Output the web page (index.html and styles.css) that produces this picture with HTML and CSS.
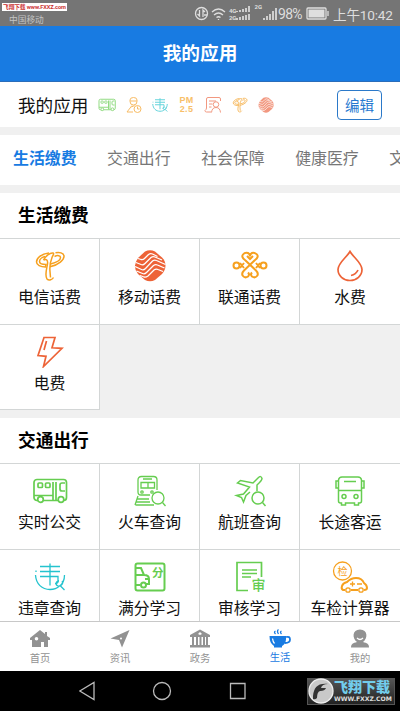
FILE: index.html
```html
<!DOCTYPE html>
<html lang="zh-CN">
<head>
<meta charset="utf-8">
<meta name="viewport" content="width=device-width">
<title>我的应用</title>
<link rel="stylesheet" href="styles.css">
</head>
<body>
<svg class="defs" aria-hidden="true">
  <symbol id="bus" viewBox="0 0 36 32"><rect x="2" y="4.5" width="32.5" height="21" rx="3"/><path d="M2 20.5h19M21 7v18M24 7v18M33 8h-3q-2 0-2 2v4q0 2 2 2h3"/><rect x="6" y="8" width="4.5" height="4.5" rx="1"/><rect x="13.500" y="8" width="4.500" height="4.500" rx="1"/><g fill="#fff"><circle cx="8.500" cy="24.500" r="2.800"/><circle cx="29" cy="24.500" r="2.800"/></g></symbol>
  <symbol id="wei" viewBox="0 0 36 32"><path d="M3.500 14C4 23 10 28.500 18 28.500c4 0 7-1 9.500-3.500M32.500 14c0 5-2 9-5 11M27 20c-3 0-4 4-1 5s6-3 4-5M28.500 25l4 4M4 9.500v1.500M8 5.500h20M8 10.500h20M8 15.500h18v5q0 2-3 2M18 2.500v22"/></symbol>
  <symbol id="telecom" viewBox="0 0 36 32"><path d="M17 3C9 4 4.500 8 4.500 12c0 3 4 5 9 5l.5-2.500c-4 0-6.500-1-6.500-3C7.500 9 10.500 7 13 6.500"/><path d="M11.500 10c2-4 6.500-7.500 9.500-7 1.500.5 0 2-1 4.500-2 5-2.500 9-2 14l.5 6M11.500 10c3-1.500 4.500 0 4 4-1 6-3 11-.5 15 2 2 5.500.5 6.500-1.500"/><path d="M23.500 2.800c4-.8 8 0 8.500 3 .5 4-5.500 9-14 11M22.500 6.500c3-1.500 6-1 6 1 0 2.500-4 5-10 6.500"/></symbol>
  <symbol id="mobile" viewBox="0 0 36 32"><path class="solid" d="M13 1.500Q18-1 23 1.500l7 6q3.500 3.500 3.500 8T30 24l-7 6q-5 2.500-10 0l-7-6Q2.500 20 3 15.500T6.500 7.500z"/><g stroke="#fff" stroke-width="1.300"><path d="M6 8.500l3 1q2 .5 3.500-1l4-4q2-1.500 4-.5l5 2.500M4 12.500l5 2q2 1 4-1l6-6q2-1.500 4-.5l7 3M3 16.500l6.500 3q2 1 4-1l7-7.500q2-1.500 4-.5l9 4M4.500 21l6 2.500q2 1 4-1l7-7q2-1.500 4-.5l7 3M8 25.500l4 1.500q2 .5 4-1l6-6q2-1.500 4-.5l5 2"/></g></symbol>
  <symbol id="magnifier" viewBox="0 0 36 32"><circle cx="26" cy="23" r="6" fill="#fff"/><path d="M30.500 27.500l3 3.500"/></symbol>
</svg>

<header class="status">
  <div class="carrier"><span class="stamp">飞翔下载 www.FXXZ.com</span><span class="operator">中国移动</span></div>
  <div class="signals">
    <svg width="15" height="15" viewBox="0 0 15 15"><circle cx="7.500" cy="7.500" r="6"/><path d="M5.500 4v6l-2-2M9 11V4l2 2M10 9h3"/></svg>
    <svg width="15" height="14" viewBox="0 0 15 14"><path d="M1 5q6.500-6 13 0M3 8q4.500-4 9 0M5.500 10.500q2-1.500 4 0M7.500 12v1"/></svg>
    <span class="gen">4G<br>2G</span>
    <svg class="bars" width="15" height="15" viewBox="0 0 15 15"><path d="M1 6V5M4 6V4M7 6V3M10 6V2M13 6V0M1 14v-2M4 14v-3M7 14v-4M10 14v-5M13 14V8"/></svg>
    <span class="gen single">2G</span>
    <svg class="bars" width="15" height="15" viewBox="0 0 15 15"><path d="M2 14v-2M5 14v-4M8 14V8M11 14V5M14 14V2"/></svg>
    <span class="percent">98%</span>
    <svg class="battery" width="23" height="13" viewBox="0 0 23 13"><rect x="1" y="1" width="19" height="11" rx="1"/><path class="solid" d="M2.500 2.500h16v8h-16z"/><path d="M22 4v5"/></svg>
    <span class="time">上午10:42</span>
  </div>
</header>
<h1 class="title">我的应用</h1>

<main class="content">
  <section class="mine">
    <span class="mine-label">我的应用</span>
    <div class="mini-icons">
      <svg class="green"><use href="#bus"/></svg>
      <svg class="amber" viewBox="0 0 36 32"><path d="M10 9V6q0-5 7-5t7 5v3q0 7-7 7t-7-7zM10 8h14M14 17L4 30h12M13 20l6-3"/><circle cx="25" cy="24" r="7"/><path d="M25 19v5h4"/></svg>
      <svg class="teal"><use href="#wei"/></svg>
      <span class="pm">PM<br>2.5</span>
      <svg class="coral" viewBox="0 0 36 32"><path d="M14 30H5q-3 0-3-3 3-2 3-5V4q0-3 3-3h22q3 0 3 3v4M10 8h14M10 14h7M10 20h5"/><circle cx="24" cy="15" r="5.500"/><path d="M15 31q1-10 9-10t9 10"/></svg>
      <svg class="amber"><use href="#telecom"/></svg>
      <svg class="coral"><use href="#mobile"/></svg>
    </div>
    <button class="edit">编辑</button>
  </section>

  <nav class="tabs"><span class="tab active">生活缴费</span><span class="tab">交通出行</span><span class="tab">社会保障</span><span class="tab">健康医疗</span><span class="tab">文</span></nav>

  <section class="group">
    <h2>生活缴费</h2>
    <div class="grid">
      <div class="cell"><svg class="icon orange strong"><use href="#telecom"/></svg><span>电信话费</span></div>
      <div class="cell"><svg class="icon red"><use href="#mobile"/></svg><span>移动话费</span></div>
      <div class="cell"><svg class="icon orange thick" viewBox="0 0 36 32"><path d="M13 10L24 20.500q3 3 1 5.500t-5 .5q-2-2 0-4M23 10L12 20.500q-3 3-1 5.500t5 .5q2-2 0-4M13 10q-4-3-2-5.500t5-1.500q2 1 2 3.500 0-2.500 2-3.500t5 1.500q2 2.500-2 5.500M15 6l3 3 3-3M8 13l4 5M12 13l-4 5M24 13l4 5M28 13l-4 5"/><circle cx="4.500" cy="15.500" r="3"/><circle cx="31.500" cy="15.500" r="3"/></svg><span>联通话费</span></div>
      <div class="cell"><svg class="icon red bold" viewBox="0 0 36 32"><path d="M18 1.500C15 7 6 13 6 19.500a12 11 0 0 0 24 0C30 13 21 7 18 1.500zM19 25.500q5-1 7-5.500"/></svg><span>水费</span></div>
      <div class="cell"><svg class="icon red bold" viewBox="0 0 36 32"><path d="M12 1.500h11l-3 10.300 10 .500L11.500 30.500 14 20.300l-8-.800zM14.500 5L12 14"/></svg><span>电费</span></div>
    </div>
  </section>

  <section class="group">
    <h2>交通出行</h2>
    <div class="grid">
      <div class="cell"><svg class="icon green bold"><use href="#bus"/></svg><span>实时公交</span></div>
      <div class="cell"><svg class="icon green" viewBox="0 0 36 32"><path d="M18 20H9q-3 0-3-3V5q0-3.500 3.500-3.500h12Q25 1.500 25 5v10M11 4h9M9 7.500h13.500V13H9zM16 7.500V13M6 21l-3 9M5.500 24H17M4.500 27H18M3.500 30H22"/><circle cx="10" cy="17" r="1.200"/><circle cx="20" cy="17" r="1.200"/><use href="#magnifier" width="36" height="32"/></svg><span>火车查询</span></div>
      <div class="cell"><svg class="icon green strong" viewBox="0 0 36 32"><path d="M18 17L14 20.500l-2.500 6.500-2-4.500-5-2 7-1.500 6-7-12-4 3-2.500 12.500 2.500 5-5q3-3 4 .5 0 2-5 6.500v6"/><use href="#magnifier" width="36" height="32"/></svg><span>航班查询</span></div>
      <div class="cell"><svg class="icon green strong" viewBox="0 0 36 32"><path d="M6.500 26V5Q7 2 10 2h16q3 0 3.500 3v21q0 2-2 2h-1v2h-4v-2h-9v2h-4v-2h-1q-2 0-2-2zM6.500 15.500h23M12 6.500h12M6.500 6H4v7h2.500M29.500 6H32v7h-2.500"/><circle cx="12" cy="21.500" r="2"/><circle cx="24" cy="21.500" r="2"/></svg><span>长途客运</span></div>
      <div class="cell"><svg class="icon teal"><use href="#wei"/></svg><span>违章查询</span></div>
      <div class="cell"><svg class="icon green thick" viewBox="0 0 36 32"><rect x="3.500" y="2.500" width="29" height="27" rx="2"/><path d="M4 7h5l3 7M4 14h8q5 0 5 4v5h-3M4 24h4M13 18h3"/><circle cx="11.500" cy="24" r="2.500"/><text class="glyph heavy" x="20" y="16" font-size="11.500">分</text></svg><span>满分学习</span></div>
      <div class="cell"><svg class="icon green bold" viewBox="0 0 36 32"><path d="M16 29.500H5V1.500h24.500V16M10 9h15M10 12.500h15M10 16h9"/><text class="glyph medium" x="19.500" y="29" font-size="14">审</text></svg><span>审核学习</span></div>
      <div class="cell"><svg class="icon orange" viewBox="0 0 36 32"><circle cx="10.500" cy="10" r="9"/><text class="glyph" x="5.500" y="14" font-size="10">检</text><path class="thick" d="M13 29h-2q-2-1-1-4 1-3 5-4 4-4 9-4 6 0 8 5 3 2 3 5 0 2-3 2M19 29h7"/><path d="M18 23h5M20.500 20.500v5M25 23h5"/><circle cx="16" cy="29" r="2.200"/><circle cx="29" cy="29" r="2.200"/></svg><span>车检计算器</span></div>
    </div>
  </section>
</main>

<nav class="bottom">
  <div class="item"><svg viewBox="0 0 22 20"><path class="solid" fill-rule="evenodd" d="M11 1L1 9v2h2v7h9v-5h3v5h4v-7h2V9l-3-2V3h-2v2zM7.500 8a1.800 1.800 0 1 1 0 3.600 1.800 1.800 0 0 1 0-3.600z"/></svg><span>首页</span></div>
  <div class="item"><svg viewBox="0 0 22 20"><path class="solid" d="M20.500 1L1.500 9.500 10 11l3 7.500z"/><circle cx="12" cy="9.500" r="1" fill="#fff" stroke="none"/></svg><span>资讯</span></div>
  <div class="item"><svg viewBox="0 0 22 20"><path class="solid" fill-rule="evenodd" d="M11 .5L1 6v2h2v8H1v2.500h20V16h-2V8h2V6zM5 8h2v8H5zm4 0h1.500v8H9zm3.500 0H14v8h-1.500zM16 8h1v8h-1zM11 3l2 2-2 1-2-1z"/></svg><span>政务</span></div>
  <div class="item active"><svg viewBox="0 0 22 20"><path class="solid" d="M.5 7H17c.5 6-1.500 9-4 10v1.500H5V17C2 15 .5 12 .5 7z"/><path stroke-width="1.800" d="M17 8q4-1 4 2.500t-5 3.500"/><path d="M6.500 5q-2-2 0-3M9.500 5q-2-3 0-4.500M12.500 5q-2-2 0-3"/><path stroke="#fff" d="M3.500 9.500q.5 3.500 2 5"/></svg><span>生活</span></div>
  <div class="item"><svg viewBox="0 0 22 20"><path class="solid" d="M11 .5c8 0 8 9 3 12.500 4 1 6 2 6 5.500H2c0-3.500 2-4.500 6-5.500C3 9.500 3 .5 11 .5z"/><path stroke="#fff" d="M8 9q3 3 6 0"/></svg><span>我的</span></div>
</nav>
<footer class="system">
  <svg class="keys" viewBox="0 0 180 24"><path d="M15 3.500v17L.8 12zM151.500 4.500h14.500v15h-14.500z"/><circle cx="83" cy="12" r="8.500"/></svg>
  <div class="watermark">
    <svg width="26" height="26" viewBox="0 0 26 26"><circle cx="13" cy="13" r="12" fill="#c9c9c9" stroke="#eee"/><path fill="#333" stroke="none" d="M5 18C6 10 9 5 20 6q-6 0-7 4h5q-1 3-6 3-3 1-3 7-2 2-4 1z"/></svg>
    <div class="mark"><b>飞翔下载</b><small>WWW.FXXZ.COM</small></div>
  </div>
</footer>
</body>
</html>
```
FILE: styles.css
```css
* { box-sizing: border-box; }
body {
  margin: 0;
  width: 400px;
  height: 711px;
  overflow: hidden;
  display: flex;
  flex-direction: column;
  background: #f0f0f0;
  color: #111;
  font-family: Roboto, "Noto Sans CJK SC", sans-serif;
}
svg { fill: none; stroke: currentColor; stroke-width: 1.3; flex: none; }
.solid { fill: currentColor; stroke: none; }
.defs { position: absolute; width: 0; height: 0; }

.status {
  height: 26px;
  flex: none;
  display: flex;
  justify-content: space-between;
  background: #757575;
  color: #dedede;
  padding: 3px 8px 0 2px;
}
.carrier { display: flex; flex-direction: column; }
.stamp {
  width: 65px;
  height: 8px;
  background: #fff;
  color: #c33;
  font-size: 5.7px;
  font-weight: 700;
  line-height: 8px;
  white-space: nowrap;
  text-align: center;
  letter-spacing: -0.1px;
}
.operator { font-size: 8.7px; line-height: 12px; margin: 3px 0 0 7px; color: #c4c4c4; }
.signals { display: flex; align-items: center; height: 21px; }
.signals svg { margin-right: 2px; }
.gen { font-size: 6px; line-height: 7px; font-weight: 700; margin-left: 1px; }
.gen.single { align-self: flex-start; margin-left: 2px; }
.signals .bars { stroke-width: 1.7; margin-right: 1px; }
.percent { font-size: 14px; width: 26px; letter-spacing: -0.7px; }
.signals .battery { margin: 0 4px 0 2px; }
.time { font-size: 13.6px; white-space: nowrap; width: 59px; letter-spacing: -0.2px; }

.title {
  margin: 0;
  height: 56px;
  flex: none;
  background: #187be2;
  border-bottom: 1px solid #2a6dba;
  color: #fff;
  text-align: center;
  font-size: 18.7px;
  line-height: 57px;
  font-weight: 700;
}
.content { flex: 1; min-height: 0; overflow: hidden; }

.mine {
  height: 45px;
  background: #fff;
  display: flex;
  align-items: center;
  padding: 0 18px;
}
.mine-label { font-size: 17.6px; width: 80px; white-space: nowrap; }
.mini-icons { display: flex; gap: 8.5px; align-items: center; }
.mini-icons svg { width: 18px; height: 16px; opacity: 0.7; stroke-width: 2; }
.pm {
  width: 18px;
  font: 700 9px/9px "Liberation Sans", sans-serif;
  color: #f8bf69;
  text-align: center;
  letter-spacing: 0.3px;
}
.edit {
  margin-left: auto;
  width: 45px;
  height: 30px;
  padding: 0;
  border: 1px solid #2b79c9;
  border-radius: 4px;
  background: #fff;
  color: #2779d0;
  font: 14.500px/26px "Noto Sans CJK SC", sans-serif;
}

.tabs {
  height: 50px;
  margin: 8px 0;
  background: #fff;
  display: flex;
  gap: 30.500px;
  padding-left: 13px;
  overflow: hidden;
  white-space: nowrap;
  font-size: 15.900px;
  line-height: 48px;
  color: #777;
}
.tab.active { color: #187be2; font-weight: 700; }

.group { margin-bottom: 8px; }
.group h2 {
  margin: 0;
  height: 45px;
  padding-left: 18px;
  background: #fff;
  font-size: 17.700px;
  line-height: 47px;
  color: #000;
}
.grid {
  display: grid;
  grid-template-columns: repeat(4, 100px);
  grid-auto-rows: 85.500px;
  border-top: 1px solid #d3d6d6;
}
.cell {
  background: #fff;
  border-right: 1px solid #d3d6d6;
  border-bottom: 1px solid #d3d6d6;
  display: flex;
  flex-direction: column;
  align-items: center;
  padding-top: 11px;
  font-size: 15.800px;
  white-space: nowrap;
}
.cell:nth-child(4n) { border-right: 0; }
.cell span { line-height: 24px; margin-top: 4px; }
.icon { width: 36px; height: 32px; }
.strong { stroke-width: 1.5; }
.bold { stroke-width: 1.700; }
.thick { stroke-width: 2; }
.glyph { fill: currentColor; stroke: none; font-family: "Noto Sans CJK SC", sans-serif; }
.medium { font-weight: 500; }
.heavy { font-weight: 700; }
.orange { color: #f6a01e; }
.amber { color: #f5a126; }
.red { color: #ed6337; }
.coral { color: #ed6d4b; }
.green { color: #66cd50; }
.teal { color: #24c3ce; }

.bottom {
  height: 50px;
  flex: none;
  display: flex;
  background: #fff;
  border-top: 1px solid #c8c8c8;
}
.item {
  flex: 1;
  display: flex;
  flex-direction: column;
  align-items: center;
  padding-top: 7px;
  font-size: 10.300px;
  color: #929292;
}
.item svg { width: 22px; height: 20px; }
.item span { line-height: 15px; margin-top: 2px; }
.item.active { color: #187be2; }
.item.active span { margin-top: 1px; }

.system {
  height: 40px;
  flex: none;
  background: #000;
  display: flex;
  justify-content: space-between;
  align-items: center;
  padding: 0 5px 0 79px;
}
.keys { width: 180px; height: 24px; color: #bbb; }
.watermark {
  width: 88px;
  height: 27px;
  border: 1px solid #555;
  background: linear-gradient(#555, #222);
  display: flex;
  align-items: center;
}
.mark { display: flex; flex-direction: column; white-space: nowrap; }
.mark b { font-size: 14px; line-height: 16px; font-weight: 900; color: #72cdec; }
.mark small { font: 700 6.2px/8px "DejaVu Sans", sans-serif; color: #ddd; letter-spacing: -0.1px; }
```
